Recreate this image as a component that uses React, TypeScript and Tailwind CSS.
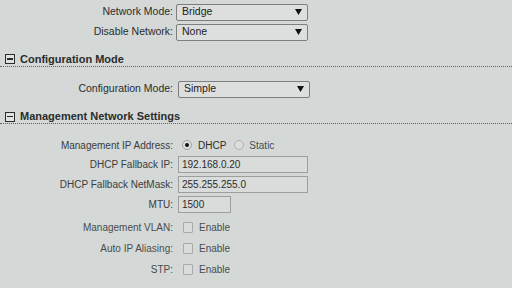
import React from "react";

const font = { fontFamily: '"Liberation Sans", Arial, sans-serif' };

function Select({ value }: { value: string }) {
  return (
    <div className="w-[132px] h-[17px] border border-[#7c7f7d] rounded-[2px] bg-[#dcdfdd] flex items-center justify-between pl-[5px] pr-[5px] text-[10.5px] text-[#1e2021]">
      <span>{value}</span>
      <svg width="7" height="6" viewBox="0 0 7 6">
        <polygon points="0,0 7,0 3.5,6" fill="#111" />
      </svg>
    </div>
  );
}

function Input({ value, w }: { value: string; w: string }) {
  return (
    <div className={`${w} ml-[2px] h-[17px] border border-[#9c9f9d] bg-[#d9dcda] flex items-center pl-[3px] text-[10px] text-[#2a2c2d]`}>
      {value}
    </div>
  );
}

function Row({ label, children, h, labelColor = "text-[#2b2d2e]", size = "text-[10px]" }: { label: string; children: React.ReactNode; h: string; labelColor?: string; size?: string }) {
  return (
    <div className={`flex items-center ${h}`}>
      <div className={`w-[174px] text-right ${size} ${labelColor} pr-[1px] whitespace-nowrap`}>{label}</div>
      <div className="pl-[2px] flex items-center">{children}</div>
    </div>
  );
}

function Header({ title, h }: { title: string; h: string }) {
  return (
    <div className={`flex items-center ${h} border-b border-dotted border-[#5f6261] pl-[5px] gap-[5px]`}>
      <div className="w-[10px] h-[10px] border border-[#2a2c2d] flex items-center justify-center bg-[#e0e2e0]">
        <div className="w-[6px] h-[1.5px] bg-[#2a2c2d]" />
      </div>
      <span className="text-[11px] font-bold text-[#2a2d2e]">{title}</span>
    </div>
  );
}

function Check() {
  return <div className="w-[10px] h-[11px] border border-[#a8aba9] bg-[#dadcdb] rounded-[1px] ml-[7px]" />;
}

function Enable() {
  return <span className="ml-[6px] text-[10px] text-[#4a4d4e]">Enable</span>;
}

export default function App() {
  return (
    <div className="w-[512px] h-[288px] overflow-hidden bg-[#d4d8d6]" style={font}>
      <div className="pt-[2px]">
        <Row label="Network Mode:" h="h-[20px]" size="text-[10.5px]">
          <Select value="Bridge" />
        </Row>
        <Row label="Disable Network:" h="h-[20px]" size="text-[10.5px]">
          <Select value="None" />
        </Row>
      </div>
      <div className="mt-[10px]">
        <Header title="Configuration Mode" h="h-[15px]" />
      </div>
      <div className="mt-[12px]">
        <Row label="Configuration Mode:" h="h-[20px]" size="text-[10.5px]">
          <div className="ml-[2px]"><Select value="Simple" /></div>
        </Row>
      </div>
      <div className="mt-[11px]">
        <Header title="Management Network Settings" h="h-[14px]" />
      </div>
      <div className="mt-[11px]">
        <Row label="Management IP Address:" h="h-[20px]" labelColor="text-[#3a3d3e]">
          <div className="flex items-center text-[10px] text-[#2a2c2d]">
            <div className="ml-[6px] w-[10px] h-[10px] rounded-full border border-[#a0a3a1] bg-[#dcdedc] flex items-center justify-center">
              <div className="w-[4px] h-[4px] rounded-full bg-[#111]" />
            </div>
            <span className="ml-[6px]">DHCP</span>
            <div className="ml-[8px] w-[10px] h-[10px] rounded-full border border-[#b0b3b1] bg-[#dcdedc]" />
            <span className="ml-[5px] text-[#4a4d4e]">Static</span>
          </div>
        </Row>
        <Row label="DHCP Fallback IP:" h="h-[19px]" labelColor="text-[#3a3d3e]">
          <Input value="192.168.0.20" w="w-[130px]" />
        </Row>
        <Row label="DHCP Fallback NetMask:" h="h-[20px]" labelColor="text-[#3a3d3e]">
          <Input value="255.255.255.0" w="w-[130px]" />
        </Row>
        <Row label="MTU:" h="h-[20px]" labelColor="text-[#3a3d3e]">
          <Input value="1500" w="w-[53px]" />
        </Row>
        <div className="mt-[3px]">
          <Row label="Management VLAN:" h="h-[21px]" labelColor="text-[#4a4d4e]">
            <Check />
            <Enable />
          </Row>
          <Row label="Auto IP Aliasing:" h="h-[21px]" labelColor="text-[#4a4d4e]">
            <Check />
            <Enable />
          </Row>
          <Row label="STP:" h="h-[21px]" labelColor="text-[#4a4d4e]">
            <Check />
            <Enable />
          </Row>
        </div>
      </div>
    </div>
  );
}
